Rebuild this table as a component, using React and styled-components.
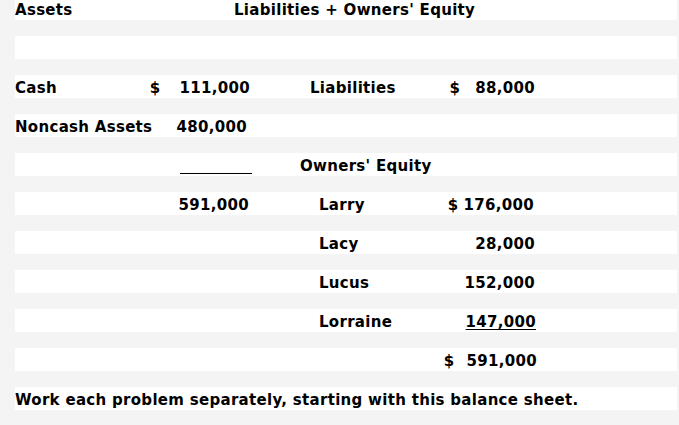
import React from 'react';
import styled, { createGlobalStyle } from 'styled-components';

const GlobalStyle = createGlobalStyle`
  html, body {
    margin: 0;
    padding: 0;
    background: #f4f4f4;
  }
  body {
    font-family: "DejaVu Sans", "Liberation Sans", Arial, sans-serif;
    font-weight: bold;
    font-size: 15px;
    letter-spacing: 0.3px;
    color: #000;
    overflow: hidden;
  }
`;

const Sheet = styled.div`
  width: 679px;
  height: 425px;
  box-sizing: border-box;
  padding: 0 2px 0 15px;
  display: flex;
  flex-direction: column;
  gap: 16px;
  overflow: hidden;
`;

const Row = styled.div`
  display: grid;
  grid-template-columns: 135px 100px 190px 95px 1fr;
  height: 23px;
  flex: 0 0 23px;
  box-sizing: border-box;
  padding-top: 2px;
  line-height: 22px;
  background: #fff;
  white-space: nowrap;
  margin-top: ${p => p.$first ? '-3px' : '0'};
`;

const Label = styled.span`
  grid-column: ${p => p.$col || 1};
  padding-left: ${p => p.$indent || 0}px;
`;

const Amount = styled.span`
  grid-column: ${p => p.$col || 2};
  display: flex;
  justify-content: flex-end;
  gap: ${p => p.$gap || 0}px;
  margin-right: ${p => p.$shift || 0}px;
`;

const Num = styled.span`
  text-decoration: ${p => p.$underline ? 'underline' : 'none'};
  text-underline-offset: 2px;
  text-decoration-thickness: 1px;
`;

const Rule = styled.span`
  grid-column: 2;
  justify-self: end;
  width: 72px;
  margin-right: -2px;
  height: 18px;
  border-bottom: 1px solid #000;
`;

const Header = styled.span`
  grid-column: 2 / 5;
  padding-left: 84px;
`;

const Note = styled.span`
  grid-column: 1 / -1;
`;

const Money = ({ col, dollar, gap, shift, underline, children }) => (
  <Amount $col={col} $gap={gap} $shift={shift}>
    {dollar && <span>$</span>}
    <Num $underline={underline}>{children}</Num>
  </Amount>
);

export default function App() {
  return (
    <>
      <GlobalStyle />
      <Sheet>
        <Row $first>
          <Label>Assets</Label>
          <Header>Liabilities + Owners' Equity</Header>
        </Row>
        <Row />
        <Row>
          <Label>Cash</Label>
          <Money dollar gap={19}>111,000</Money>
          <Label $col={3} $indent={60}>Liabilities</Label>
          <Money col={4} dollar gap={15}>88,000</Money>
        </Row>
        <Row>
          <Label>Noncash Assets</Label>
          <Money shift={3}>480,000</Money>
        </Row>
        <Row>
          <Rule />
          <Label $col={3} $indent={50}>Owners' Equity</Label>
        </Row>
        <Row>
          <Money shift={1}>591,000</Money>
          <Label $col={3} $indent={69}>Larry</Label>
          <Money col={4} dollar gap={5} shift={1}>176,000</Money>
        </Row>
        <Row>
          <Label $col={3} $indent={69}>Lacy</Label>
          <Money col={4}>28,000</Money>
        </Row>
        <Row>
          <Label $col={3} $indent={69}>Lucus</Label>
          <Money col={4}>152,000</Money>
        </Row>
        <Row>
          <Label $col={3} $indent={69}>Lorraine</Label>
          <Money col={4} underline shift={-1}>147,000</Money>
        </Row>
        <Row>
          <Money col={4} dollar gap={12} shift={-2}>591,000</Money>
        </Row>
        <Row>
          <Note>Work each problem separately, starting with this balance sheet.</Note>
        </Row>
      </Sheet>
    </>
  );
}
